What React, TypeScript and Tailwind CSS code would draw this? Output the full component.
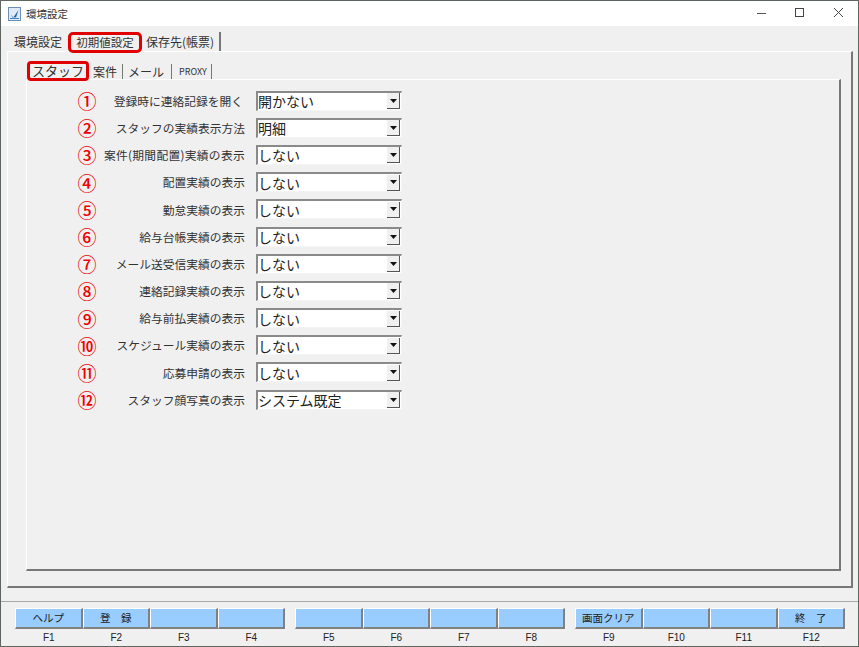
import React from 'react';

const ROWS = [
    { no: '①', label: '登録時に連絡記録を開く', value: '開かない', pad: 'pr-[2px]' },
    { no: '②', label: 'スタッフの実績表示方法', value: '明細', pad: '' },
    { no: '③', label: '案件(期間配置)実績の表示', value: 'しない', pad: 'tracking-[0.3px]' },
    { no: '④', label: '配置実績の表示', value: 'しない', pad: '' },
    { no: '⑤', label: '勤怠実績の表示', value: 'しない', pad: '' },
    { no: '⑥', label: '給与台帳実績の表示', value: 'しない', pad: '' },
    { no: '⑦', label: 'メール送受信実績の表示', value: 'しない', pad: '' },
    { no: '⑧', label: '連絡記録実績の表示', value: 'しない', pad: '' },
    { no: '⑨', label: '給与前払実績の表示', value: 'しない', pad: '' },
    { no: '⑩', label: 'スケジュール実績の表示', value: 'しない', pad: '' },
    { no: '⑪', label: '応募申請の表示', value: 'しない', pad: '' },
    { no: '⑫', label: 'スタッフ顔写真の表示', value: 'システム既定', pad: '' },
];

const KEY_GROUPS = [
    [{ key: 'F1', text: 'ヘルプ' }, { key: 'F2', text: '登　録' }, { key: 'F3', text: '' }, { key: 'F4', text: '' }],
    [{ key: 'F5', text: '' }, { key: 'F6', text: '' }, { key: 'F7', text: '' }, { key: 'F8', text: '' }],
    [{ key: 'F9', text: '画面クリア' }, { key: 'F10', text: '' }, { key: 'F11', text: '' }, { key: 'F12', text: '終　了' }],
];

const Combo: React.FC<{ value: string }> = ({ value }) => (
    <div className="w-[146px] h-[20px] flex items-center bg-white border-t-2 border-l-2 border-t-[#8a8a8a] border-l-[#8a8a8a] border-b border-r border-b-[#f4f4f4] border-r-[#f4f4f4]">
        <span className="flex-1 text-[14px] leading-none text-[#222] whitespace-nowrap">{value}</span>
        <span className="w-[13px] h-[16px] mr-[1px] flex items-center justify-center bg-[#f0f0f0] border-r border-b border-r-[#555] border-b-[#555]">
            <svg width="7" height="4" viewBox="0 0 7 4"><path d="M0 0h7L3.5 4z" fill="#111" /></svg>
        </span>
    </div>
);

const App: React.FC = () => {
    return (
        <div className="w-[859px] h-[647px] flex flex-col overflow-hidden bg-[#f0f0f0] border border-[#5f665f] font-['Noto_Sans_CJK_JP','Liberation_Sans',sans-serif] text-[11px] text-[#333]">
            {/* Title bar */}
            <div className="h-[25px] shrink-0 bg-white flex items-center pl-[7px]">
                <svg width="13" height="14" viewBox="0 0 13 14">
                    <rect x="0.5" y="0.5" width="12" height="13" fill="#dfeaf6" stroke="#6d8fb5" />
                    <path d="M2.5 7.5l2.5 3.5 5.5-8-2.5 7.5-3-.5z" fill="#1f5fa8" />
                    <path d="M2 11.5h9" stroke="#3f86c8" />
                </svg>
                <span className="ml-[5px] text-[10.5px] text-[#333]">環境設定</span>
                <div className="ml-auto flex items-center">
                    <svg width="46" height="25" viewBox="0 0 46 25"><path d="M28 12.5h9" stroke="#555" /></svg>
                    <svg width="39" height="25" viewBox="0 0 39 25"><rect x="20.5" y="7.5" width="8" height="8" fill="none" stroke="#444" /></svg>
                    <svg width="44" height="25" viewBox="0 0 44 25"><path d="M20 7l9 9M29 7l-9 9" stroke="#444" /></svg>
                </div>
            </div>

            {/* Outer tabs */}
            <div className="h-[25px] shrink-0 flex items-end pl-[7px] text-[12px]">
                <span className="w-[60px] h-[19px] flex items-center justify-center">環境設定</span>
                <span className="relative z-10 w-[74px] h-[21px] -mb-[2px] flex items-center justify-center border-[3px] border-[#e00000] rounded-[5px] text-[11.5px]">初期値設定</span>
                <span className="h-[19px] pl-[4px] pr-[5px] flex items-center border-r-2 border-r-[#777]">保存先(帳票)</span>
            </div>

            {/* Outer panel */}
            <div className="h-[537px] shrink-0 ml-[6px] mr-[5px] pl-[18px] pr-[10px] pt-[9px] flex flex-col border-t border-l border-t-white border-l-white border-r-2 border-b-2 border-r-[#777] border-b-[#777]">
                {/* Inner tabs */}
                <div className="h-[18px] shrink-0 flex items-end">
                    <span className="relative z-10 ml-[1px] w-[62px] h-[20px] -mb-[2px] flex items-center justify-center border-[3px] border-[#e00000] rounded-[4px] text-[13px]">スタッフ</span>
                    <span className="h-[15px] pl-[4px] pr-[5px] flex items-center border-r border-r-[#777] text-[12px]">案件</span>
                    <span className="h-[15px] pl-[5px] pr-[7px] flex items-center border-r border-r-[#777] text-[12px]">メール</span>
                    <span className="h-[15px] pl-[7px] pr-[4px] flex items-center border-r border-r-[#777] text-[9px]">PROXY</span>
                </div>

                {/* Inner panel */}
                <div className="h-[492px] shrink-0 pt-[7px] border-t border-l border-t-white border-l-white border-r-2 border-b-2 border-r-[#777] border-b-[#777]">
                    {ROWS.map(row => (
                        <div key={row.no} className="h-[27.2px] flex items-center">
                            <span className="w-[20px] ml-[50px] text-[19px] leading-none font-medium text-[#f00000] text-center">{row.no}</span>
                            <span className={`w-[148px] text-right text-[11.75px] text-[#333] whitespace-nowrap ${row.pad}`}>{row.label}</span>
                            <span className="ml-[11px]"><Combo value={row.value} /></span>
                        </div>
                    ))}
                </div>
            </div>

            {/* Function keys */}
            <div className="mt-[13px] flex-1 border-t border-t-[#a8a8a8] pt-[6px] pl-[14px] flex gap-[10px]">
                {KEY_GROUPS.map((group, i) => (
                    <div key={i} className="flex">
                        {group.map(k => (
                            <div key={k.key} className="w-[67.5px] flex flex-col items-center">
                                <div className="w-full h-[21px] flex items-center justify-center bg-[#99ccff] border-t border-l border-t-white border-l-white border-r-2 border-b-2 border-r-[#808080] border-b-[#808080] text-[10.5px] text-[#222]">
                                    {k.text}
                                </div>
                                <span className="mt-[2px] text-[10px] leading-[14px] text-[#222] font-['Liberation_Sans',sans-serif]">{k.key}</span>
                            </div>
                        ))}
                    </div>
                ))}
            </div>
        </div>
    );
};

export default App;
